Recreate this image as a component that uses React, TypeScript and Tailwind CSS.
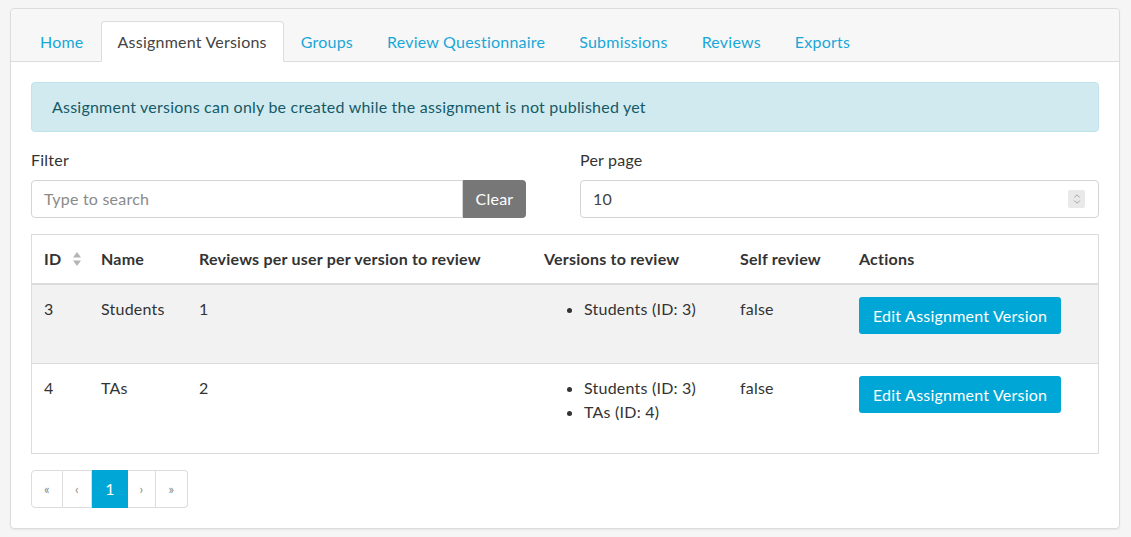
import { ChevronUp, ChevronDown } from 'lucide-react'

const TABS = ['Home', 'Assignment Versions', 'Groups', 'Review Questionnaire', 'Submissions', 'Reviews', 'Exports']

const ROWS = [
  { id: 3, name: 'Students', reviews: 1, versions: ['Students (ID: 3)'], self: 'false', hover: true },
  { id: 4, name: 'TAs', reviews: 2, versions: ['Students (ID: 3)', 'TAs (ID: 4)'], self: 'false', hover: false },
]

function SortIcon() {
  return (
    <svg width="10" height="16" viewBox="0 0 10 16" className="ml-[11px]">
      <path d="M5 1 L9 6.5 H1 Z" fill="#b5b5b5" />
      <path d="M5 15 L9 9.5 H1 Z" fill="#b5b5b5" />
    </svg>
  )
}

export default function App() {
  return (
    <div className="min-h-[537px] bg-[#f5f5f5] pt-2 px-[10px] pb-2 text-[16px] leading-6 tracking-[0.22px] text-[#333]" style={{ fontFamily: 'Lato, "Noto Sans", sans-serif' }}>
      <div className="w-[1110px] bg-white border border-[#dcdcdc] rounded-[4px] shadow-[0_1px_2px_rgba(0,0,0,0.06)]">
        {/* Tabs */}
        <div className="bg-[#f7f7f7] border-b border-[#dcdcdc] pt-3 px-3 rounded-t-[4px]">
          <div className="flex -mb-px">
            {TABS.map((t) =>
              t === 'Assignment Versions' ? (
                <div key={t} className="px-4 h-[41px] flex items-center bg-white border border-[#dcdcdc] border-b-white rounded-t-[4px] text-[#444]">{t}</div>
              ) : (
                <div key={t} className="px-4 h-[41px] flex items-center border border-transparent text-[#19a7d8]">{t}</div>
              ),
            )}
          </div>
        </div>

        <div className="p-5">
          <div className="bg-[#d1eaf0] border border-[#bfe3ea] rounded-[4px] px-5 py-3 text-[#165a66] mb-4">
            Assignment versions can only be created while the assignment is not published yet
          </div>

          <div className="grid grid-cols-2 gap-[30px] mb-4">
            <div>
              <div className="mb-2 text-[#333]">Filter</div>
              <div className="flex w-[495px] h-[38px]">
                <div className="flex-1 flex items-center border border-[#d4d4d4] rounded-l-[4px] px-3 text-[#8a8a8a]">Type to search</div>
                <div className="w-[63px] bg-[#777] text-white flex items-center justify-center rounded-r-[4px]">Clear</div>
              </div>
            </div>
            <div>
              <div className="mb-2 text-[#333]">Per page</div>
              <div className="flex items-center justify-between h-[38px] border border-[#d4d4d4] rounded-[4px] pl-3 pr-[13px]">
                <span className="text-[#444]">10</span>
                <div className="w-[17px] h-[18px] bg-[#e9e9e9] rounded-[2px] flex flex-col items-center justify-center text-[#8a8a8a]">
                  <ChevronUp size={10} strokeWidth={1.75} className="-mb-[2px]" />
                  <ChevronDown size={10} strokeWidth={1.75} className="-mt-[2px]" />
                </div>
              </div>
            </div>
          </div>

          <div className="border border-[#dcdcdc] mb-4">
            <div className="grid grid-cols-[57px_98px_345px_196px_119px_1fr] font-bold text-[#333] border-b-2 border-[#dcdcdc] py-3 pl-3">
              <div className="flex items-center">ID<SortIcon /></div>
              <div>Name</div>
              <div>Reviews per user per version to review</div>
              <div>Versions to review</div>
              <div>Self review</div>
              <div>Actions</div>
            </div>
            {ROWS.map((r, i) => (
              <div key={r.id} className={`grid grid-cols-[57px_98px_345px_196px_119px_1fr] pt-3 pb-3 pl-3 ${r.hover ? 'bg-[#f2f2f2]' : 'bg-white'} ${i > 0 ? 'border-t border-[#dcdcdc]' : ''}`}>
                <div>{r.id}</div>
                <div>{r.name}</div>
                <div>{r.reviews}</div>
                <div>
                  <ul className="list-disc pl-10 mb-[17px]">
                    {r.versions.map((v) => (
                      <li key={v}>{v}</li>
                    ))}
                  </ul>
                </div>
                <div>{r.self}</div>
                <div>
                  <div className="inline-flex items-center h-[37px] px-[14px] bg-[#00a7d6] text-white rounded-[3px] mb-[17px]">Edit Assignment Version</div>
                </div>
              </div>
            ))}
          </div>

          <div className="flex h-[38px] text-[#888] text-[13px]">
            <div className="w-[32px] flex items-center justify-center border border-[#dcdcdc] rounded-l-[4px]">«</div>
            <div className="w-[29px] flex items-center justify-center border border-l-0 border-[#dcdcdc]">‹</div>
            <div className="w-[36px] flex items-center justify-center bg-[#00a7d6] text-white text-[16px]">1</div>
            <div className="w-[28px] flex items-center justify-center border border-l-0 border-[#dcdcdc]">›</div>
            <div className="w-[32px] flex items-center justify-center border border-l-0 border-[#dcdcdc] rounded-r-[4px]">»</div>
          </div>
        </div>
      </div>
    </div>
  )
}
